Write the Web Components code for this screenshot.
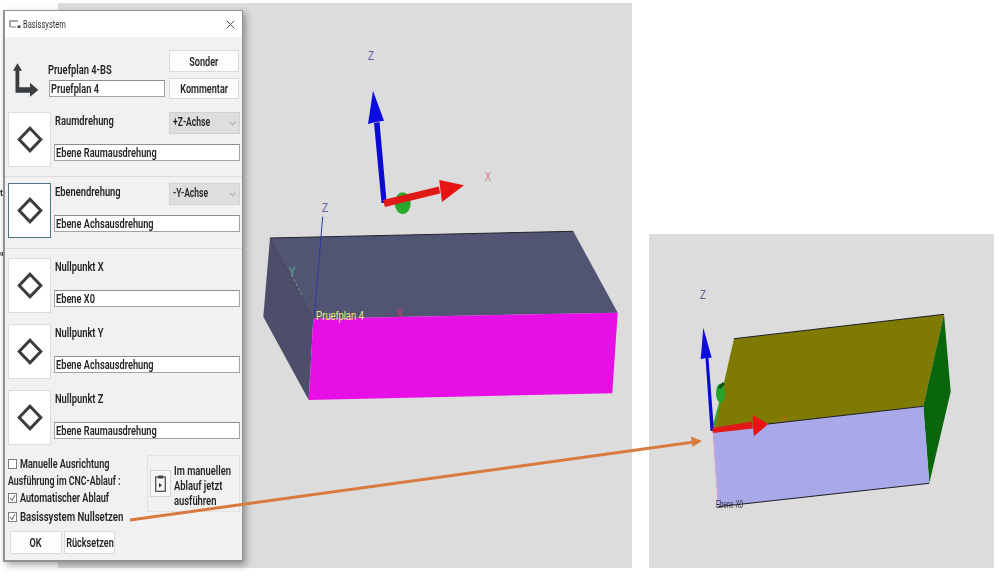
<!DOCTYPE html>
<html lang="de"><head><meta charset="utf-8"><title>Basissystem</title>
<style>
html,body{margin:0;padding:0;background:#fff;width:999px;height:578px;overflow:hidden}
body{font:600 13px Roboto,"Liberation Sans",sans-serif;color:#232323}
</style></head><body>
<x-app>
  <x-viewport slot="views" kind="a"></x-viewport>
  <x-viewport slot="views" kind="b"></x-viewport>
  <x-dialog slot="dialog">
    <x-head name="Pruefplan 4-BS" value="Pruefplan 4"></x-head>
    <x-row value="Ebene Raumausdrehung" select="+Z-Achse" style="margin-top:13px">Raumdrehung</x-row>
    <x-sep style="margin:9px 0 6px"></x-sep>
    <x-row value="Ebene Achsausdrehung" select="-Y-Achse" focus>Ebenendrehung</x-row>
    <x-sep style="margin:10px 0 9px"></x-sep>
    <x-row value="Ebene X0">Nullpunkt X</x-row>
    <x-row value="Ebene Achsausdrehung" style="margin-top:11px">Nullpunkt Y</x-row>
    <x-row value="Ebene Raumausdrehung" style="margin-top:11px">Nullpunkt Z</x-row>
    <x-foot></x-foot>
  </x-dialog>
</x-app>
<script>
const define=(n,html)=>{
  customElements.define(n,class extends HTMLElement{
    connectedCallback(){
      if(this.shadowRoot)return;
      const r=this.attachShadow({mode:'open'});
      r.innerHTML=typeof html==='function'?html(this):html;
    }
  });
};
const esc=s=>String(s||'').replace(/&/g,'&amp;').replace(/</g,'&lt;');

define('x-t',`<style>:host{display:inline-block;white-space:nowrap;transform:scaleX(var(--sx,.74));transform-origin:var(--o,0 50%)}</style><slot></slot>`);

define('x-field',`<style>:host{display:flex;align-items:center;box-sizing:border-box;height:var(--h,17px);background:#fff;border:1px solid #a3a3a3;border-top-color:#8f8f8f;padding-left:1px;overflow:hidden;--sx:.71}</style><x-t><slot></slot></x-t>`);

define('x-btn',`<style>:host{display:flex;align-items:center;justify-content:center;box-sizing:border-box;background:#fdfdfd;border:1px solid #dadada;--o:50% 50%;--sx:.70;white-space:nowrap}</style><x-t><slot></slot></x-t>`);

define('x-select',`<style>:host{display:flex;align-items:center;justify-content:space-between;box-sizing:border-box;height:22px;background:#dedede;border:1px solid #d2d2d2;padding:0 3px 3px 3px;--sx:.66}svg{width:7px;height:5px;flex:none;margin-top:3px}</style><x-t><slot></slot></x-t><svg viewBox="0 0 9 6"><path d="M1 1l3.500 3.500L8 1" fill="none" stroke="#8b8b8b" stroke-width="1.200"/></svg>`);

define('x-diamond',h=>`<style>:host{display:flex;align-items:center;justify-content:center;box-sizing:border-box;width:43px;height:55px;background:#fff;border:1px solid ${h.hasAttribute('focus')?'#5c7f8a':'#dcdcdc'};${h.hasAttribute('focus')?'outline:1px dotted #3d6b7a;outline-offset:-1px;':''}}</style>
<svg width="26" height="27" viewBox="0 0 26 27"><path d="M13 2.200L23.800 13.500 13 24.800 2.200 13.500Z" fill="none" stroke="#393d40" stroke-width="3"/></svg>`);

define('x-sep',`<style>:host{display:block;height:1px;background:#dddddd}</style>`);

define('x-row',h=>{
  const sel=h.getAttribute('select');
  return `<style>:host{display:grid;grid-template-columns:43px 186px;column-gap:3px;height:55px;margin-left:3px}
  .r{display:grid;grid-template-rows:22px 1fr;position:relative}
  .top{display:flex;justify-content:space-between;align-items:flex-start}
  .lab{line-height:16px;margin:1px 0 0 1px;--sx:.72}
  x-select{width:71px}
  x-field{margin-top:10px;align-self:start}
  </style>
  <x-diamond ${h.hasAttribute('focus')?'focus':''}></x-diamond>
  <div class="r"><div class="top"><x-t class="lab"><slot></slot></x-t>${sel?`<x-select>${esc(sel)}</x-select>`:''}</div>
  <x-field>${esc(h.getAttribute('value'))}</x-field></div>`;
});

define('x-head',h=>`<style>:host{display:grid;grid-template-columns:34px 116px 70px;column-gap:4px;height:49px;margin:13px 0 0 5px;position:relative}
.ic{align-self:end;margin-bottom:1px}
.m{display:grid;grid-template-rows:30px 17px;}
.m x-t{align-self:end;margin-bottom:3px;--sx:.72}
.b{display:grid;grid-template-rows:22px 21px;row-gap:6px;margin-left:1px}
x-field{margin-left:1px;width:116px}
</style>
<svg class="ic" width="30" height="38" viewBox="0 0 30 38"><path d="M7.500 3.300L12 10.700H9.300V27.300H20V22.700L28.300 30 20 36.700V32.700H5.500V10.700H3Z" fill="#393d40"/></svg>
<div class="m"><x-t>${esc(h.getAttribute('name'))}</x-t><x-field>${esc(h.getAttribute('value'))}</x-field></div>
<div class="b"><x-btn>Sonder</x-btn><x-btn>Kommentar</x-btn></div>`);

define('x-check',h=>`<style>:host{display:flex;align-items:center;gap:3px;height:17px}
i{display:block;box-sizing:border-box;width:9px;height:10px;background:#fff;border:1px solid #7d7d7d;flex:none;position:relative}
svg{position:absolute;left:0;top:0;width:7px;height:8px}</style>
<i>${h.hasAttribute('checked')?'<svg viewBox="0 0 7 8"><path d="M1 4l2 2.500L6 1.200" fill="none" stroke="#555" stroke-width="1"/></svg>':''}</i><x-t><slot></slot></x-t>`);

define('x-foot',`<style>:host{display:block;margin:10px 0 0 3px}
.g{display:grid;grid-template-columns:139px 93px;height:57px}
.l{display:flex;flex-direction:column}
.p{box-sizing:border-box;border:1px solid #e2e2e2;display:flex;align-items:center;gap:3px;padding-left:2px;height:57px;background:#f1f1f1}
.ib{box-sizing:border-box;width:21px;height:27px;background:#f8f8f8;border:1px solid #d4d4d4;display:flex;align-items:center;justify-content:center;flex:none}
.t{display:flex;flex-direction:column;line-height:15px;margin-top:3px;align-items:flex-start;--sx:.72}
.tx{height:17px;line-height:17px;display:block;--sx:.68}
.bt{display:flex;margin:19px 0 0 2px;height:23px}
.bt x-btn:first-child{width:52px}.bt x-btn:last-child{width:51px;margin-left:2px}
.last{margin-top:2px}
.n{--sx:.70}
</style>
<div class="g"><div class="l">
<x-check class="n">Manuelle Ausrichtung</x-check>
<div class="tx"><x-t>Ausführung im CNC-Ablauf :</x-t></div>
<x-check checked class="n">Automatischer Ablauf</x-check>
<x-check checked class="last">Basissystem Nullsetzen</x-check>
</div>
<div class="p"><div class="ib"><svg width="11" height="17" viewBox="0 0 11 17"><rect x=".7" y="2" width="9.600" height="14.300" fill="none" stroke="#444" stroke-width="1.200"/><rect x="3" y=".5" width="5" height="3" fill="#444"/><path d="M4 8l3 2.300L4 12.600Z" fill="#333"/></svg></div>
<div class="t"><x-t>Im manuellen</x-t><x-t>Ablauf jetzt</x-t><x-t>ausführen</x-t></div></div></div>
<div class="bt"><x-btn>OK</x-btn><x-btn>Rücksetzen</x-btn></div>`);

define('x-dialog',`<style>:host{position:absolute;left:3px;top:10px;width:240px;height:552px;box-sizing:border-box;background:#f1f1f1;border:1px solid #8c9496;border-left-width:2px;border-bottom-width:2px;box-shadow:3px 3px 7px rgba(0,0,0,.35);display:block}
.tb{display:flex;align-items:center;height:26px;background:#fff;padding:0 4px 0 4px;font-weight:400;font-size:10.5px;color:#333;--sx:.72}
.tb svg.a{margin-right:2px;flex:none}
.tb x-t{flex:1}
.tb svg.c{flex:none}
</style>
<div class="tb"><svg class="a" width="12" height="10" viewBox="0 0 12 10"><path d="M1 8V2H9" fill="none" stroke="#8a8a8a" stroke-width="1.500"/><path d="M1 8H7" stroke="#aaa" stroke-width="1.500"/><rect x="8.500" y="6.500" width="3" height="2.500" fill="#444"/></svg><x-t>Basissystem</x-t>
<svg class="c" width="9" height="9" viewBox="0 0 9 9" style="margin-right:3px"><path d="M.7 .7l7.600 7.600M8.300 .7L.7 8.300" stroke="#555" stroke-width="1"/></svg></div>
<slot></slot>`);

const lab=(x,y,s,fill)=>`<text x="${x}" y="${y}" font-size="12" fill="${fill}" textLength="6" lengthAdjust="spacingAndGlyphs">${s}</text>`;
const SCENE_A=`<svg width="574" height="565" viewBox="58 3 574 565">
<polygon points="270,238 573.300,231.300 617.700,312.700 313.300,318.700" fill="#525473"/>
<polygon points="270,238 313.300,318.700 308.700,400 263.300,316.700" fill="#4c4e6a"/>
<polygon points="313.300,318.700 617.700,312.700 612.300,393.300 308.700,400" fill="#e80fe6"/>
<path d="M270,238L573.300,231.300" stroke="#23232f" stroke-width="1"/>
<path d="M270,238L313.300,318.700" stroke="#34354a" stroke-width=".7"/>
<path d="M322.700,216.700L314.300,316.700" stroke="#2b3aa6" stroke-width="1"/>
<path d="M291.700,275L301.700,295" stroke="#7fb59a" stroke-width="1" stroke-dasharray="2 3"/>
<text x="288.500" y="275" font-size="11" fill="#5fa590">Y</text>
<text x="316" y="319.500" font-size="12" fill="#f0ee86" textLength="48" lengthAdjust="spacingAndGlyphs">Pruefplan 4</text>
<text x="396" y="317" font-size="10" fill="#d03a6a">X</text>
<ellipse cx="402.700" cy="203.300" rx="8" ry="11" fill="#27a92e"/>
<polygon points="381.500,203 374,123 379.500,122 386.700,203" fill="#0a0ad2"/>
<polygon points="373,90.700 384,120.700 376,122 368,124" fill="#0c0ce0"/>
<polygon points="383,200 439,186.500 440,193.500 385,207" fill="#e01818"/>
<polygon points="439.300,180 464,185.300 442,202 440.500,191" fill="#e81414"/>
${lab(368,60,'Z','#5d619f')}${lab(322,211.500,'Z','#5d619f')}${lab(485,181,'X','#d77b7d')}
</svg>`;
const SCENE_B=`<svg width="345" height="334" viewBox="649 234 345 334">
<polygon points="734,338.700 944,314.300 923.300,406.300 713,430.500" fill="#7f7a02"/>
<polygon points="944,314.300 950.700,391.700 929.300,483.300 923.300,406.300" fill="#0a660c"/>
<polygon points="713,430.500 923.300,406.300 929.300,483.300 718.300,506.700" fill="#a9a9e9"/>
<path d="M734,338.700L944,314.300M768,424L923.300,406.300M718.300,506.700L929.300,483.300" stroke="#1c1c26" stroke-width="1" fill="none"/>
<path d="M713,431L718.300,506.700" stroke="#d4a0d4" stroke-width="1"/>
<path d="M714,425L722,395" stroke="#2da632" stroke-width="2"/>
<ellipse cx="720.500" cy="393" rx="4.500" ry="9.500" fill="#22a52a"/>
<path d="M719,388L724,383" stroke="#114d14" stroke-width="3"/>
<polygon points="710.500,431 705.500,358 708.500,358 714,431" fill="#0a0ad2"/>
<polygon points="703.300,327.700 711.700,357.700 706,358 700.700,359.300" fill="#0c0ce0"/>
<polygon points="712.300,428 752,421.500 752.800,428.500 713,433" fill="#e01818"/>
<polygon points="752.700,415 768.300,424 754,436.300 753,428" fill="#e81414"/>
${lab(700,299,'Z','#6064a0')}
<text x="781" y="421" font-size="9" fill="#c9622c">X</text>
<text x="716" y="508" font-size="11" fill="#2a2a3a" textLength="27" lengthAdjust="spacingAndGlyphs">Ebene X0</text>
</svg>`;
define('x-viewport',h=>`<style>:host{display:block;background:#dcdcdc;overflow:hidden;flex:none;box-sizing:border-box;${h.getAttribute('kind')==='a'?'width:574px;height:565px;margin:3px 0 0 58px':'width:345px;height:334px;margin:234px 0 0 17px'}}svg{display:block;font-family:"Liberation Sans",sans-serif;font-weight:400}</style>${h.getAttribute('kind')==='a'?SCENE_A:SCENE_B}`);

define('x-app',`<style>:host{display:block;position:relative;width:999px;height:578px;overflow:hidden;filter:blur(.35px)}
.v{display:flex;align-items:flex-start}
.frag{position:absolute;left:0;line-height:12px}
.ov{position:absolute;left:0;top:0;pointer-events:none}</style>
<div class="v"><slot name="views"></slot></div>
<span class="frag" style="top:187px;font-size:9px">t</span><span class="frag" style="top:247px;font-size:6px">g</span>
<slot name="dialog"></slot>
<svg class="ov" width="999" height="578" viewBox="0 0 999 578"><path d="M130,520L694,442" stroke="#d97b40" stroke-width="3"/><polygon points="702,441 691,436.500 692.500,447" fill="#d97b40"/></svg>`);
</script>
</body></html>
